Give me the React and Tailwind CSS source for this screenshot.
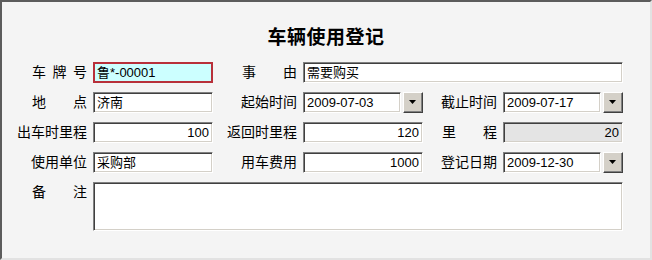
import React from 'react';

const FONT = { fontFamily: '"Liberation Sans", "Noto Sans CJK SC", sans-serif' };

const Spread = ({ text }) => (
  <span className="flex w-[55px] justify-between">
    {text.split('').map((c, i) => (
      <span key={i}>{c}</span>
    ))}
  </span>
);

const Label = ({ text, w, spread }) => (
  <div className={`${w} flex shrink-0 justify-end pr-[6px] text-[14px] leading-[21px] text-black`}>
    {spread ? <Spread text={text} /> : <span>{text}</span>}
  </div>
);

const sunken =
  'h-[21px] border border-t-[#808080] border-l-[#808080] border-b-white border-r-white shadow-[inset_1px_1px_0_#404040,inset_-1px_-1px_0_#d4d0c8] px-[3px] text-[13px] leading-[19px] text-black';

const Field = ({ value = '', w, right, disabled, focused }) => {
  if (focused) {
    return (
      <div className={`${w} h-[21px] border-2 border-[#b8303a] bg-[#ccffff] px-[2px] text-[13px] leading-[17px] text-black`}>
        {value}
      </div>
    );
  }
  return (
    <div className={`${w} ${sunken} ${disabled ? 'bg-[#e4e4e4]' : 'bg-white'} ${right ? 'text-right' : ''}`}>
      {value}
    </div>
  );
};

const DateBox = ({ value }) => (
  <div className="flex w-[120px] gap-[2px]">
    <Field value={value} w="w-[98px]" />
    <div className="flex h-[21px] w-[20px] items-center justify-center border border-t-white border-l-white border-b-[#404040] border-r-[#404040] bg-[#d4d0c8] shadow-[inset_-1px_-1px_0_#808080]">
      <svg width="8" height="5" viewBox="0 0 8 5">
        <path d="M0 0 H7 L3.5 4 Z" fill="#000" />
      </svg>
    </div>
  </div>
);

export default function App() {
  return (
    <div
      style={FONT}
      className="flex h-[260px] w-[652px] flex-col border-t-2 border-l-2 border-r-2 border-b-2 border-t-[#5c5c5c] border-l-[#5c5c5c] border-r-[#e2e2e2] border-b-[#e2e2e2] bg-[#f4f4f4]"
    >
      <div className="mt-[24px] text-center text-[19px] font-bold leading-[24px] tracking-[0.5px] text-black">
        车辆使用登记
      </div>

      <div className="mt-[12px] flex flex-col gap-[9px]">
        <div className="flex items-center">
          <Label text="车牌号" w="w-[91px]" spread />
          <Field value="鲁*-00001" w="w-[120px]" focused />
          <Label text="事由" w="w-[90px]" spread />
          <Field value="需要购买" w="w-[320px]" />
        </div>

        <div className="flex items-center">
          <Label text="地点" w="w-[91px]" spread />
          <Field value="济南" w="w-[120px]" />
          <Label text="起始时间" w="w-[90px]" />
          <DateBox value="2009-07-03" />
          <Label text="截止时间" w="w-[80px]" />
          <DateBox value="2009-07-17" />
        </div>

        <div className="flex items-center">
          <Label text="出车时里程" w="w-[91px]" />
          <Field value="100" w="w-[120px]" right />
          <Label text="返回时里程" w="w-[90px]" />
          <Field value="120" w="w-[120px]" right />
          <Label text="里程" w="w-[80px]" spread />
          <Field value="20" w="w-[120px]" right disabled />
        </div>

        <div className="flex items-center">
          <Label text="使用单位" w="w-[91px]" />
          <Field value="采购部" w="w-[120px]" />
          <Label text="用车费用" w="w-[90px]" />
          <Field value="1000" w="w-[120px]" right />
          <Label text="登记日期" w="w-[80px]" />
          <DateBox value="2009-12-30" />
        </div>

        <div className="flex items-start">
          <Label text="备注" w="w-[91px]" spread />
          <div className="h-[49px] w-[530px] border border-t-[#808080] border-l-[#808080] border-b-white border-r-white bg-white shadow-[inset_1px_1px_0_#404040,inset_-1px_-1px_0_#d4d0c8]" />
        </div>
      </div>
    </div>
  );
}
